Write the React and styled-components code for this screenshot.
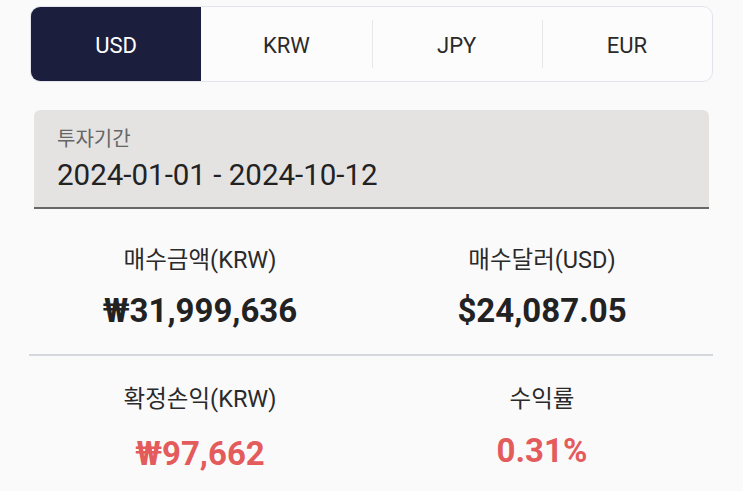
import React, { useState } from 'react';
import styled, { createGlobalStyle } from 'styled-components';

const GlobalStyle = createGlobalStyle`
  html, body {
    margin: 0;
    padding: 0;
    background: #fbfafb;
  }
  body {
    font-family: Roboto, "Noto Sans CJK KR", sans-serif;
    color: #222;
  }
`;

const currencies = ['USD', 'KRW', 'JPY', 'EUR'];

const App = () => {
  const [active, setActive] = useState('USD');

  return (
    <Page>
      <GlobalStyle />
      <TabBar>
        {currencies.map((c, i) => (
          <Tab
            key={c}
            $active={active === c}
            $divider={i > 0 && active !== c && active !== currencies[i - 1]}
            onClick={() => setActive(c)}
          >
            {c}
          </Tab>
        ))}
      </TabBar>

      <PeriodBox>
        <PeriodLabel>투자기간</PeriodLabel>
        <PeriodValue>2024-01-01 - 2024-10-12</PeriodValue>
      </PeriodBox>

      <StatsRow $divider>
        <Stat>
          <StatLabel>매수금액(KRW)</StatLabel>
          <StatValue>₩31,999,636</StatValue>
        </Stat>
        <Stat>
          <StatLabel>매수달러(USD)</StatLabel>
          <StatValue>$24,087.05</StatValue>
        </Stat>
      </StatsRow>

      <StatsRow $second>
        <Stat>
          <StatLabel>확정손익(KRW)</StatLabel>
          <StatValue $red $gap={21}>₩97,662</StatValue>
        </Stat>
        <Stat>
          <StatLabel>수익률</StatLabel>
          <StatValue $red $gap={18}>0.31%</StatValue>
        </Stat>
      </StatsRow>
    </Page>
  );
};

// Styled components

const Page = styled.div`
  width: 743px;
  height: 491px;
  padding: 6px 30px 0 29px;
  box-sizing: border-box;
  overflow: hidden;
`;

const TabBar = styled.div`
  display: grid;
  grid-template-columns: repeat(4, 1fr);
  height: 76px;
  border: 1.5px solid #e4e3ec;
  border-radius: 10px;
  background: #fdfcfd;
  box-sizing: border-box;
  overflow: hidden;
  margin-left: 1px;
`;

const Tab = styled.div`
  position: relative;
  display: flex;
  align-items: center;
  justify-content: center;
  padding-top: 2px;
  font-size: 22px;
  color: ${(p) => (p.$active ? '#fff' : '#2a2a2a')};
  background: ${(p) => (p.$active ? '#1b1f3d' : 'transparent')};
  cursor: pointer;

  &::before {
    content: '';
    display: ${(p) => (p.$divider ? 'block' : 'none')};
    position: absolute;
    left: 0;
    top: 13px;
    bottom: 13px;
    width: 1px;
    background: #e8e7ea;
  }
`;

const PeriodBox = styled.div`
  margin: 28px 4px 0 5px;
  height: 99px;
  box-sizing: border-box;
  padding: 16px 23px 0;
  background: #e4e3e2;
  border-radius: 6px 6px 0 0;
  border-bottom: 2px solid #676767;
  display: flex;
  flex-direction: column;
`;

const PeriodLabel = styled.div`
  font-size: 20px;
  line-height: 26px;
  color: #666;
`;

const PeriodValue = styled.div`
  margin-top: 6px;
  font-size: 29.5px;
  line-height: 34px;
  color: #222;
`;

const StatsRow = styled.div`
  display: grid;
  grid-template-columns: 1fr 1fr;
  padding: ${(p) => (p.$second ? '28px 0 0' : '36px 0 24px')};
  border-bottom: ${(p) => (p.$divider ? '2px solid #d4d7db' : 'none')};
`;

const Stat = styled.div`
  display: flex;
  flex-direction: column;
  align-items: center;
`;

const StatLabel = styled.div`
  font-size: 23.5px;
  line-height: 30px;
  color: #2a2a2a;
`;

const StatValue = styled.div`
  margin-top: ${(p) => p.$gap ?? 17}px;
  font-size: 33px;
  line-height: 38px;
  font-weight: 700;
  color: ${(p) => (p.$red ? '#e35b5b' : '#222')};
`;

export default App;
